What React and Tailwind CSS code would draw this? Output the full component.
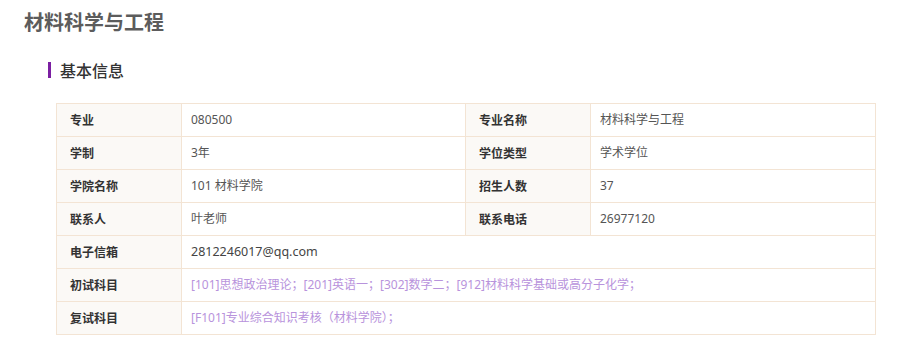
export default function App() {
  const font = { fontFamily: '"Noto Sans CJK SC", "Noto Sans", sans-serif' };
  const rows = [
    ["专业", "080500", "专业名称", "材料科学与工程"],
    ["学制", "3年", "学位类型", "学术学位"],
    ["学院名称", "101 材料学院", "招生人数", "37"],
    ["联系人", "叶老师", "联系电话", "26977120"],
  ];
  const label = "h-[33px] border-r border-b border-[#f3e4d4] bg-[#fbf9f6] pl-[13px] flex items-center text-[12px] font-bold text-[#333]";
  const value = "h-[33px] border-r border-b border-[#f3e4d4] bg-white pl-[9px] flex items-center text-[12px] text-[#555] font-['Noto_Sans','Noto_Sans_CJK_SC',sans-serif]";
  return (
    <div className="w-[918px] h-[354px] bg-white pt-[8px] pl-[24px]" style={font}>
      <h1 className="text-[20px] leading-[28px] font-bold text-[#5c5c5c]">材料科学与工程</h1>
      <div className="mt-[26px] ml-[24px] flex items-center h-[16px]">
        <div className="w-[3px] h-[16px] bg-[#7b1fa2]"></div>
        <div className="ml-[9px] text-[16px] leading-[16px] font-medium text-[#333]">基本信息</div>
      </div>
      <div className="mt-[25px] ml-[32px] w-[820px] grid grid-cols-[125px_284px_125px_285px] border-l border-t border-[#f3e4d4]">
        {rows.map((r, i) => (
          <div key={i} className="contents">
            <div className={label}>{r[0]}</div>
            <div className={value}>{r[1]}</div>
            <div className={label}>{r[2]}</div>
            <div className={value}>{r[3]}</div>
          </div>
        ))}
        <div className={label}>电子信箱</div>
        <div className={value + " col-span-3 !text-[12.5px] !text-[#444]"}>2812246017@qq.com</div>
        <div className={label}>初试科目</div>
        <div className={value + " col-span-3 !text-[#b893dc]"}>[101]思想政治理论；[201]英语一；[302]数学二；[912]材料科学基础或高分子化学；</div>
        <div className={label}>复试科目</div>
        <div className={value + " col-span-3 !text-[#b893dc]"}>[F101]专业综合知识考核（材料学院）；</div>
      </div>
    </div>
  );
}
